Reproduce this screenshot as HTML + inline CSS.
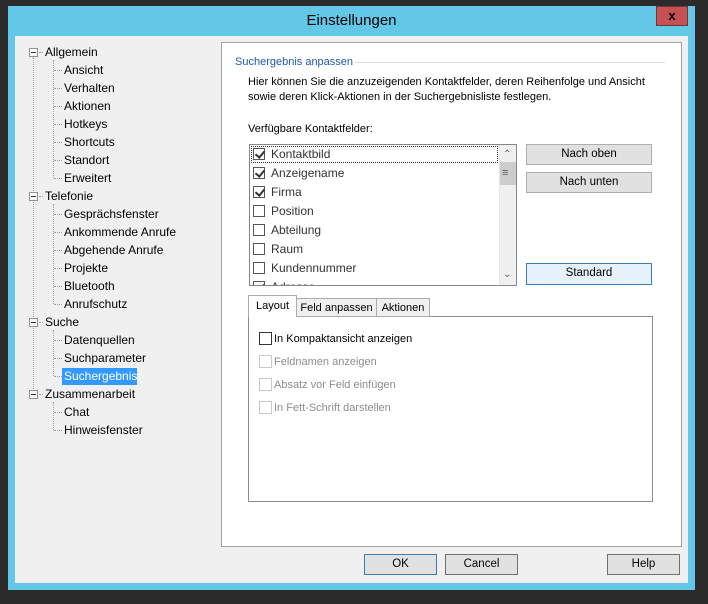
<!DOCTYPE html>
<html><head><meta charset="utf-8"><style>
*{margin:0;padding:0;box-sizing:border-box}
body{width:708px;height:604px;background:#2b2b2b;position:relative;overflow:hidden;font-family:"Liberation Sans",sans-serif;font-size:12px;color:#000}
.a{position:absolute}
#win{left:8px;top:6px;width:687px;height:584px;background:#63c8e8}
#title{left:0;top:0;width:687px;height:30px;text-align:center;line-height:30px;font-size:15px;color:#000}
#close{left:648px;top:0;width:32px;height:20px;background:#c75050;border:1px solid #6d3a3a;color:#000;font-weight:bold;font-size:13px;text-align:center;line-height:17px}
.t{position:absolute;white-space:nowrap;line-height:16px}
.s{font-size:11px}
.box{position:absolute;width:9px;height:9px;border:1px solid #919191;background:#f8f8f8}
.box:after{content:"";position:absolute;left:1px;top:3px;width:5px;height:1px;background:#333}
.vl{position:absolute;border-left:1px dotted #a0a0a0;width:0}
.hl{position:absolute;border-top:1px dotted #a0a0a0;height:0}
.btn{position:absolute;background:#e1e1e1;border:1px solid #adadad;text-align:center;line-height:19px;font-size:11.5px}
.cb{position:absolute;width:12px;height:12px;border:1px solid #333;background:#fff}
.cbc:after{content:"";position:absolute;left:3px;top:0px;width:4px;height:7px;border:solid #333;border-width:0 2px 2px 0;transform:rotate(40deg)}
</style></head><body>
<div class="a" id="win">
 <div class="a" id="title">Einstellungen</div>
 <div class="a" id="close">x</div>
</div>
<div class="a" style="left:15px;top:36px;width:673px;height:547px;background:#f0f0f0"></div>

<div class="vl" style="left:33px;top:57px;height:342px"></div>
<div class="vl" style="left:53px;top:60px;height:118px"></div>
<div class="vl" style="left:53px;top:204px;height:100px"></div>
<div class="vl" style="left:53px;top:330px;height:46px"></div>
<div class="vl" style="left:53px;top:402px;height:28px"></div>
<div class="a" style="left:62px;top:368px;width:75px;height:17px;background:#3399ff"></div>

<div class="box" style="left:29px;top:48px"></div><div class="hl" style="left:39px;top:52px;width:4px"></div><div class="t" style="left:45px;top:44px">Allgemein</div>
<div class="hl" style="left:54px;top:70px;width:8px"></div><div class="t" style="left:64px;top:62px">Ansicht</div>
<div class="hl" style="left:54px;top:88px;width:8px"></div><div class="t" style="left:64px;top:80px">Verhalten</div>
<div class="hl" style="left:54px;top:106px;width:8px"></div><div class="t" style="left:64px;top:98px">Aktionen</div>
<div class="hl" style="left:54px;top:124px;width:8px"></div><div class="t" style="left:64px;top:116px">Hotkeys</div>
<div class="hl" style="left:54px;top:142px;width:8px"></div><div class="t" style="left:64px;top:134px">Shortcuts</div>
<div class="hl" style="left:54px;top:160px;width:8px"></div><div class="t" style="left:64px;top:152px">Standort</div>
<div class="hl" style="left:54px;top:178px;width:8px"></div><div class="t" style="left:64px;top:170px">Erweitert</div>
<div class="box" style="left:29px;top:192px"></div><div class="hl" style="left:39px;top:196px;width:4px"></div><div class="t" style="left:45px;top:188px">Telefonie</div>
<div class="hl" style="left:54px;top:214px;width:8px"></div><div class="t" style="left:64px;top:206px">Gesprächsfenster</div>
<div class="hl" style="left:54px;top:232px;width:8px"></div><div class="t" style="left:64px;top:224px">Ankommende Anrufe</div>
<div class="hl" style="left:54px;top:250px;width:8px"></div><div class="t" style="left:64px;top:242px">Abgehende Anrufe</div>
<div class="hl" style="left:54px;top:268px;width:8px"></div><div class="t" style="left:64px;top:260px">Projekte</div>
<div class="hl" style="left:54px;top:286px;width:8px"></div><div class="t" style="left:64px;top:278px">Bluetooth</div>
<div class="hl" style="left:54px;top:304px;width:8px"></div><div class="t" style="left:64px;top:296px">Anrufschutz</div>
<div class="box" style="left:29px;top:318px"></div><div class="hl" style="left:39px;top:322px;width:4px"></div><div class="t" style="left:45px;top:314px">Suche</div>
<div class="hl" style="left:54px;top:340px;width:8px"></div><div class="t" style="left:64px;top:332px">Datenquellen</div>
<div class="hl" style="left:54px;top:358px;width:8px"></div><div class="t" style="left:64px;top:350px">Suchparameter</div>
<div class="hl" style="left:54px;top:376px;width:8px"></div><div class="t" style="left:64px;top:368px;color:#fff">Suchergebnis</div>
<div class="box" style="left:29px;top:390px"></div><div class="hl" style="left:39px;top:394px;width:4px"></div><div class="t" style="left:45px;top:386px">Zusammenarbeit</div>
<div class="hl" style="left:54px;top:412px;width:8px"></div><div class="t" style="left:64px;top:404px">Chat</div>
<div class="hl" style="left:54px;top:430px;width:8px"></div><div class="t" style="left:64px;top:422px">Hinweisfenster</div>

<div class="a" style="left:221px;top:42px;width:461px;height:505px;background:#fff;border:1px solid #a0a0a0"></div>
<div class="t s" style="left:235px;top:54px;color:#1e5aa8">Suchergebnis anpassen</div>
<div class="a" style="left:354px;top:62px;width:311px;height:1px;background:#dcdcdc"></div>
<div class="t s" style="left:248px;top:75px;line-height:15px">Hier können Sie die anzuzeigenden Kontaktfelder, deren Reihenfolge und Ansicht<br>sowie deren Klick-Aktionen in der Suchergebnisliste festlegen.</div>
<div class="t s" style="left:248px;top:121px">Verfügbare Kontaktfelder:</div>

<div class="a" style="left:249px;top:144px;width:268px;height:142px;border:1px solid #828790;background:#fff;overflow:hidden">
 <div class="a" style="left:1px;top:1px;width:247px;height:17px;border:1px dotted #333"></div>
 <div class="cb cbc" style="left:3px;top:3px;border-color:#555"></div><div class="t" style="left:21px;top:1px;color:#333">Kontaktbild</div>
 <div class="cb cbc" style="left:3px;top:22px;border-color:#555"></div><div class="t" style="left:21px;top:20px;color:#333">Anzeigename</div>
 <div class="cb cbc" style="left:3px;top:41px;border-color:#555"></div><div class="t" style="left:21px;top:39px;color:#333">Firma</div>
 <div class="cb" style="left:3px;top:60px;border-color:#555"></div><div class="t" style="left:21px;top:58px;color:#333">Position</div>
 <div class="cb" style="left:3px;top:79px;border-color:#555"></div><div class="t" style="left:21px;top:77px;color:#333">Abteilung</div>
 <div class="cb" style="left:3px;top:98px;border-color:#555"></div><div class="t" style="left:21px;top:96px;color:#333">Raum</div>
 <div class="cb" style="left:3px;top:117px;border-color:#555"></div><div class="t" style="left:21px;top:115px;color:#333">Kundennummer</div>
 <div class="cb cbc" style="left:3px;top:136px;border-color:#555"></div><div class="t" style="left:21px;top:134px;color:#333">Adresse</div>
 <div class="a" style="left:249px;top:0;width:17px;height:140px;background:#f0f0f0;border-left:1px solid #e6e6e6"></div>
 <div class="a" style="left:250px;top:17px;width:16px;height:23px;background:#cdcdcd"></div>
 <div class="t" style="left:253px;top:2px;font-size:10px;color:#606060">&#8963;</div>
 <div class="t" style="left:252px;top:20px;font-size:11px;color:#606060">&#8801;</div>
 <div class="t" style="left:253px;top:122px;font-size:10px;color:#606060">&#8964;</div>
</div>

<div class="btn" style="left:526px;top:144px;width:126px;height:21px">Nach oben</div>
<div class="btn" style="left:526px;top:172px;width:126px;height:21px">Nach unten</div>
<div class="btn" style="left:526px;top:263px;width:126px;height:22px;border-color:#3c7fb1;background:#e5f1fb">Standard</div>

<div class="a" style="left:248px;top:316px;width:405px;height:186px;border:1px solid #898c95;background:#fff"></div>
<div class="a s" style="left:296px;top:298px;width:81px;height:19px;border:1px solid #acacac;background:#f0f0f0;text-align:center;line-height:18px">Feld anpassen</div>
<div class="a s" style="left:376px;top:298px;width:54px;height:19px;border:1px solid #acacac;background:#f0f0f0;text-align:center;line-height:18px">Aktionen</div>
<div class="a s" style="left:248px;top:295px;width:49px;height:22px;border:1px solid #acacac;border-bottom:none;background:#fff;text-align:center;line-height:20px">Layout</div>

<div class="cb" style="left:259px;top:332px;width:13px;height:13px"></div><div class="t s" style="left:274px;top:331px">In Kompaktansicht anzeigen</div>
<div class="cb" style="left:259px;top:355px;width:13px;height:13px;border-color:#c8c8c8"></div><div class="t s" style="left:274px;top:354px;color:#8d8d8d">Feldnamen anzeigen</div>
<div class="cb" style="left:259px;top:378px;width:13px;height:13px;border-color:#c8c8c8"></div><div class="t s" style="left:274px;top:377px;color:#8d8d8d">Absatz vor Feld einfügen</div>
<div class="cb" style="left:259px;top:401px;width:13px;height:13px;border-color:#c8c8c8"></div><div class="t s" style="left:274px;top:400px;color:#8d8d8d">In Fett-Schrift darstellen</div>

<div class="btn" style="left:364px;top:554px;width:73px;height:21px;border-color:#3c7fb1">OK</div>
<div class="btn" style="left:445px;top:554px;width:73px;height:21px;border-color:#707070">Cancel</div>
<div class="btn" style="left:607px;top:554px;width:73px;height:21px;border-color:#707070">Help</div>
</body></html>
